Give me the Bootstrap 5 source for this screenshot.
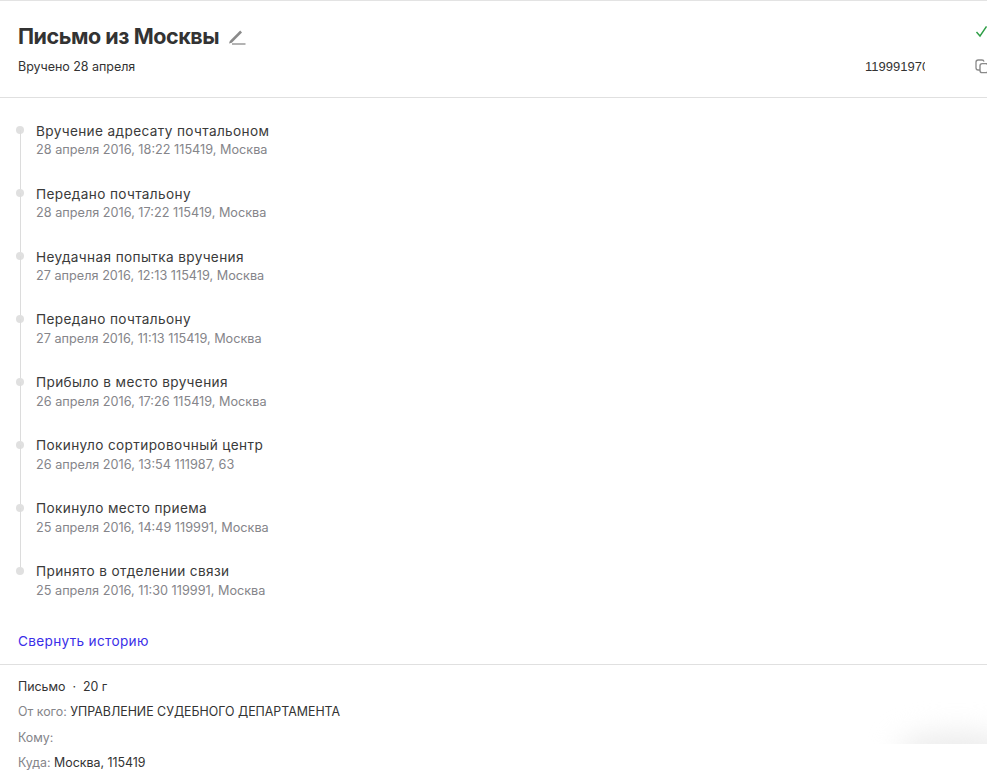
<!DOCTYPE html>
<html lang="ru">
<head>
<meta charset="utf-8">
<title>Письмо из Москвы</title>
<link href="https://cdn.jsdelivr.net/npm/bootstrap@5.3.0/dist/css/bootstrap.min.css" rel="stylesheet">
<style>
html,body{height:774px;overflow:hidden;background:#fff}
body{font-family:Inter,"Noto Sans",sans-serif;color:#333;position:relative}
.top-rule{height:1px;background:#e3e3e3}
.head-block{height:97px;padding:0 0 0 18px;border-bottom:1px solid #e0e0e0}
.head-title{font-size:21.5px;line-height:28px;font-weight:700;letter-spacing:-.45px;color:#333;margin:0}
.head-row1{padding-top:21px;height:50px}
.head-row2{height:30px;margin-top:7px}
.status-text{font-size:12.5px;line-height:18px;color:#333;letter-spacing:-.03px}
.edit-ico{margin-left:9px;margin-top:2px}
.num-clip{width:60px;overflow:hidden;white-space:nowrap;font-size:13px;line-height:18px;font-family:"Liberation Sans",sans-serif;color:#333;margin-right:50px}
.copy-ico{margin-top:1px;margin-right:-1px}
.ok-ico{margin-right:-1px;margin-top:3px}
.history-list{list-style:none;margin:0;padding:25px 0 0 18px}
.hist-item{position:relative;display:flow-root;height:63px;padding-left:18px}
.hist-item::before{content:"";position:absolute;left:-2px;top:3px;width:8px;height:8px;border-radius:50%;background:#e0e0e0}
.hist-item::after{content:"";position:absolute;left:2px;top:7px;width:1px;height:63px;background:#dcdcdc}
.hist-item:last-child::after{display:none}
.hist-name{font-size:13.6px;line-height:16px;margin-bottom:2px;color:#3a3a3a;letter-spacing:.38px}
.hist-item:nth-child(n+4) .hist-name{margin-top:-1px;margin-bottom:3px}
.hist-meta{font-size:12.7px;line-height:18px;color:#85858a}
.collapse-link{display:block;font-size:13.6px;line-height:18px;color:#3a2ee8;text-decoration:none;letter-spacing:.32px;margin:5px 0 0 18px}
.info-block{border-top:1px solid #e0e0e0;margin-top:14px;padding:13px 0 0 18px;font-size:12.4px;line-height:18px;color:#333}
.info-line{height:25.3px}
.info-key{color:#85858a}
.fade-wrap{position:absolute;right:0;top:700px;width:120px;height:44px;overflow:hidden}
.fade-blob{position:absolute;left:30px;top:32px;width:120px;height:40px;border-radius:50%;background:#ececec;filter:blur(14px)}
</style>
</head>
<body>
<div class="top-rule"></div>
<header class="head-block">
  <div class="head-row1 d-flex justify-content-between align-items-start">
    <div class="d-flex align-items-center">
      <h1 class="head-title">Письмо из Москвы</h1>
      <svg class="edit-ico" width="18" height="16" viewBox="0 0 18 16" fill="none"><path d="M1 14.6 1.8 12 12.2 1.6 14 3.4 3.8 13.8z" fill="#8a8a8a"/><path d="M4 15h13.5" stroke="#8a8a8a" stroke-width="1.3"/></svg>
    </div>
    <svg class="ok-ico" width="13" height="13" viewBox="0 0 13 13" fill="none"><path d="M1.5 7 5 11 11.5 1.5" stroke="#2e9e46" stroke-width="1.4"/></svg>
  </div>
  <div class="head-row2 d-flex justify-content-between align-items-start">
    <div class="status-text">Вручено 28 апреля</div>
    <div class="d-flex">
      <div class="num-clip">119991970</div>
      <svg class="copy-ico" width="13" height="15" viewBox="0 0 13 15" fill="none"><path d="M5 11H3.2C2 11 1 10 1 8.8V3.2C1 2 2 1 3.2 1H7c1 0 1.8.6 2 1.6" stroke="#8a8a8a" stroke-width="1.3"/><rect x="5" y="4.6" width="8" height="9" rx="2.2" stroke="#8a8a8a" stroke-width="1.4"/></svg>
    </div>
  </div>
</header>
<ul class="history-list">
  <li class="hist-item"><div class="hist-name">Вручение адресату почтальоном</div><div class="hist-meta">28 апреля 2016, 18:22 115419, Москва</div></li>
  <li class="hist-item"><div class="hist-name">Передано почтальону</div><div class="hist-meta">28 апреля 2016, 17:22 115419, Москва</div></li>
  <li class="hist-item"><div class="hist-name">Неудачная попытка вручения</div><div class="hist-meta">27 апреля 2016, 12:13 115419, Москва</div></li>
  <li class="hist-item"><div class="hist-name">Передано почтальону</div><div class="hist-meta">27 апреля 2016, 11:13 115419, Москва</div></li>
  <li class="hist-item"><div class="hist-name">Прибыло в место вручения</div><div class="hist-meta">26 апреля 2016, 17:26 115419, Москва</div></li>
  <li class="hist-item"><div class="hist-name">Покинуло сортировочный центр</div><div class="hist-meta">26 апреля 2016, 13:54 111987, 63</div></li>
  <li class="hist-item"><div class="hist-name">Покинуло место приема</div><div class="hist-meta">25 апреля 2016, 14:49 119991, Москва</div></li>
  <li class="hist-item"><div class="hist-name">Принято в отделении связи</div><div class="hist-meta">25 апреля 2016, 11:30 119991, Москва</div></li>
</ul>
<a class="collapse-link" href="#">Свернуть историю</a>
<section class="info-block">
  <div class="info-line">Письмо &nbsp;·&nbsp; 20 г</div>
  <div class="info-line"><span class="info-key">От кого:</span> УПРАВЛЕНИЕ СУДЕБНОГО ДЕПАРТАМЕНТА</div>
  <div class="info-line"><span class="info-key">Кому:</span></div>
  <div class="info-line"><span class="info-key">Куда:</span> Москва, 115419</div>
</section>
<div class="fade-wrap"><div class="fade-blob"></div></div>
</body>
</html>
